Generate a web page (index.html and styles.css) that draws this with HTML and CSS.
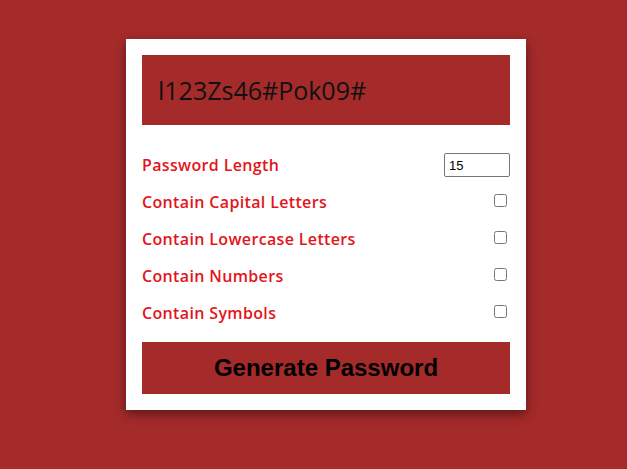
FILE: index.html
```html
<!DOCTYPE html>
<html lang="en">
<head>
<meta charset="utf-8">
<title>Password Generator</title>
<link rel="stylesheet" href="styles.css">
</head>
<body>
<main class="page">
  <section class="card">
    <div class="result">l123Zs46#Pok09#</div>
    <div class="options">
      <label class="option">
        <span class="option-label">Password Length</span>
        <input class="length-input" type="number" value="15">
      </label>
      <label class="option">
        <span class="option-label">Contain Capital Letters</span>
        <input class="check" type="checkbox">
      </label>
      <label class="option">
        <span class="option-label">Contain Lowercase Letters</span>
        <input class="check" type="checkbox">
      </label>
      <label class="option">
        <span class="option-label">Contain Numbers</span>
        <input class="check" type="checkbox">
      </label>
      <label class="option">
        <span class="option-label">Contain Symbols</span>
        <input class="check" type="checkbox">
      </label>
    </div>
    <button class="generate" type="button">Generate Password</button>
  </section>
</main>
</body>
</html>
```
FILE: styles.css
```css
html, body {
  margin: 0;
  padding: 0;
}
body {
  background: #a52a2a;
  min-height: 100vh;
  font-family: "Open Sans", "Noto Sans", sans-serif;
}
.page {
  display: flex;
  justify-content: center;
  padding-top: 39px;
  padding-left: 25px;
}
.card {
  width: 400px;
  box-sizing: border-box;
  background: #fff;
  padding: 16px;
  box-shadow: 0 4px 10px rgba(0, 0, 0, 0.45);
  display: flex;
  flex-direction: column;
}
.result {
  height: 70px;
  background: #a52a2a;
  color: #111;
  font-size: 25px;
  font-weight: 400;
  padding-left: 16px;
  display: flex;
  align-items: center;
}
.options {
  margin-top: 22px;
  display: flex;
  flex-direction: column;
}
.option {
  height: 37px;
  display: flex;
  align-items: center;
  justify-content: space-between;
}
.option-label {
  color: #e3141b;
  font-size: 16px;
  font-weight: 600;
  letter-spacing: 0.35px;
  padding-bottom: 2px;
}
.length-input {
  width: 66px;
  height: 24px;
  box-sizing: border-box;
  margin: 0 0 1px 0;
  font-family: "Liberation Sans", Arial, sans-serif;
  font-size: 13px;
  padding: 1px 4px;
  border: 1px solid #767676;
  border-radius: 2px;
  -moz-appearance: textfield;
}
.length-input::-webkit-inner-spin-button,
.length-input::-webkit-outer-spin-button {
  -webkit-appearance: none;
  margin: 0;
}
.check {
  width: 13px;
  height: 13px;
  margin: 0 3px 5px 0;
}
.generate {
  margin-top: 10px;
  height: 52px;
  border: none;
  background: #a52a2a;
  color: #000;
  font-family: "Liberation Sans", Arial, sans-serif;
  font-weight: 700;
  font-size: 24px;
  cursor: pointer;
}
```
